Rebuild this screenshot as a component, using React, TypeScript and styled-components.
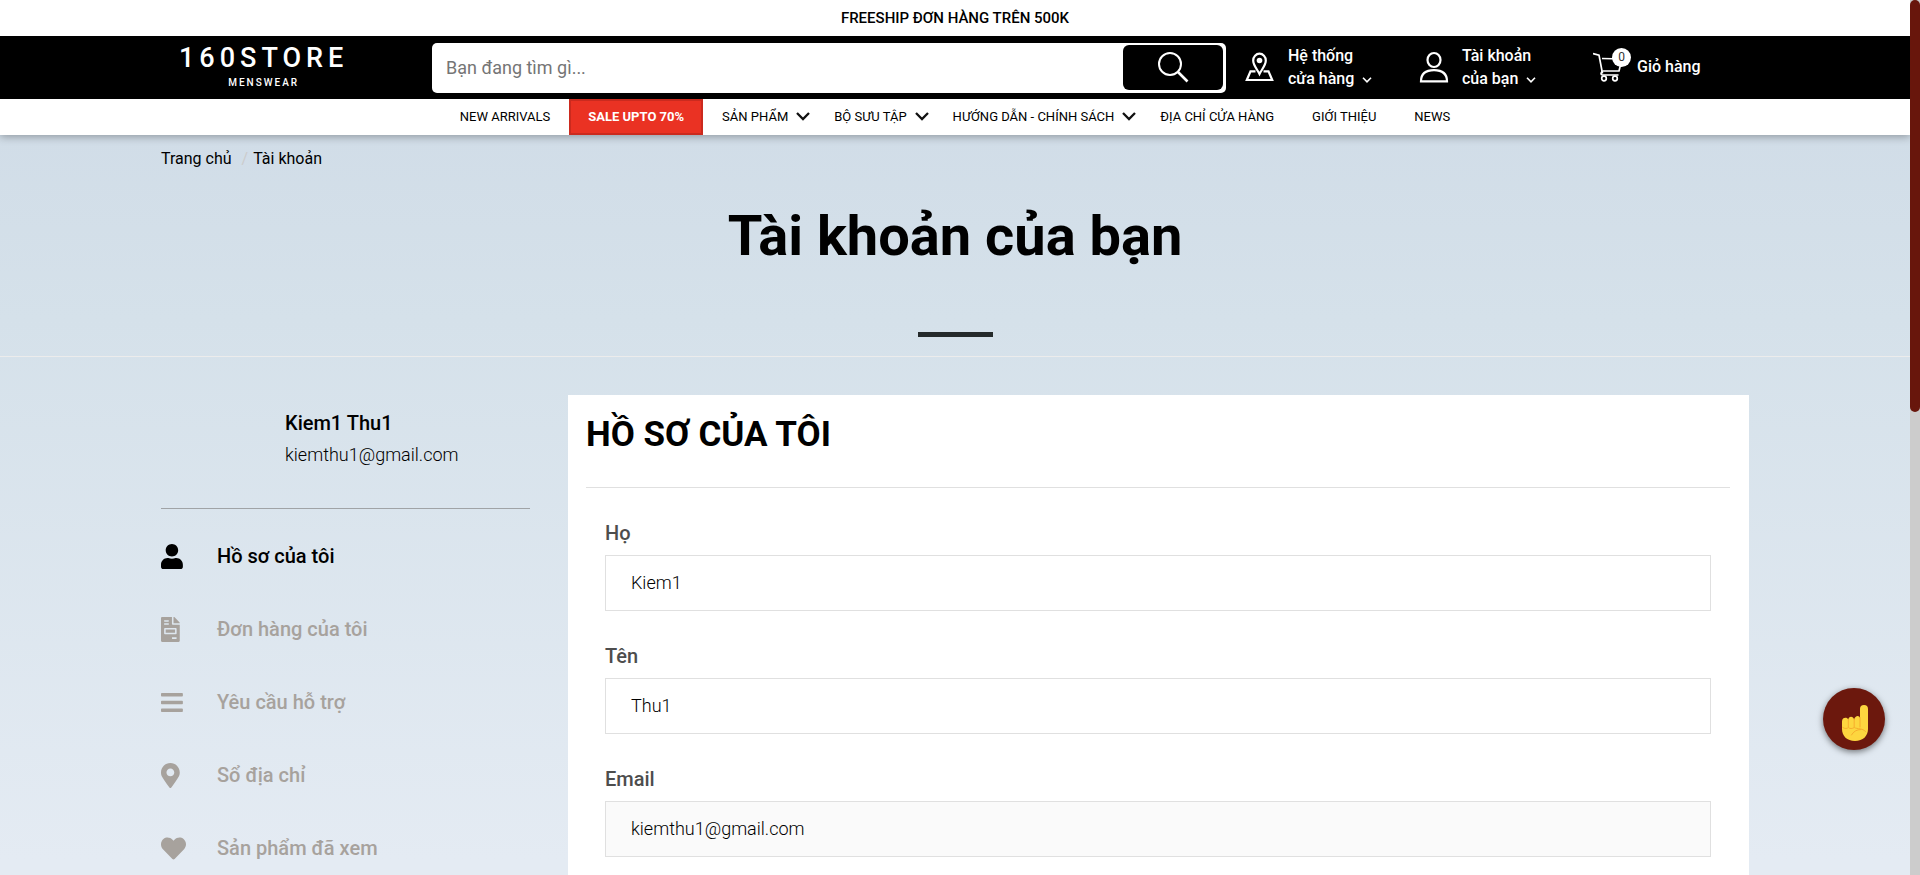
import React from "react";
import styled, { createGlobalStyle, css } from "styled-components";
import { FaBars, FaFileInvoice, FaHeart, FaMapMarkerAlt, FaUser } from "react-icons/fa";

const GlobalStyle = createGlobalStyle`
  *, *::before, *::after { box-sizing: border-box; }
  body {
    margin: 0;
    font-family: Roboto, "Noto Sans", sans-serif;
    font-size: 16px;
    color: #000;
  }
  h1, h2, p, ul { margin: 0; padding: 0; }
  ul { list-style: none; }
  a { color: inherit; text-decoration: none; }
  button, input { font: inherit; color: inherit; }
`;

const Page = styled.div`
  display: flex;
  flex-direction: column;
  min-height: 100vh;
  padding-right: 10px;
  background: linear-gradient(#cedae6 0, #d5e1ea 320px, #e4ebf3 860px);
`;

const Container = styled.div`
  width: calc(100% - 32px);
  max-width: 1588px;
  margin: 0 auto;
`;

const PromoBar = styled.p`
  height: 36px;
  line-height: 36px;
  text-align: center;
  font-size: 15px;
  font-weight: 500;
  background: #fff;
`;

const Header = styled.header`
  background: #000;
  color: #fff;
`;

const HeaderGrid = styled(Container)`
  display: grid;
  grid-template-columns: 271fr 794fr 523fr;
  align-items: center;
  height: 63px;
`;

const Logo = styled.a`
  justify-self: start;
  display: flex;
  flex-direction: column;
  align-items: center;
  margin-left: 18px;
  font-weight: 500;
  text-transform: uppercase;
`;

const LogoName = styled.span`
  font-size: 27px;
  line-height: 30px;
  letter-spacing: 5px;
`;

const LogoTag = styled.span`
  font-size: 10px;
  line-height: 20px;
  letter-spacing: 2px;
`;

const Search = styled.form`
  display: flex;
  height: 50px;
  padding: 2px 3px 3px 2px;
  border-radius: 5px;
  background: #fff;
`;

const SearchInput = styled.input`
  flex: 1;
  min-width: 0;
  padding: 0 12px;
  border: 0;
  background: none;
  color: #000;
  font-size: 18px;
  outline: none;
  &::placeholder { color: #757575; opacity: 1; }
`;

const SearchButton = styled.button`
  display: grid;
  place-items: center;
  width: 100px;
  padding: 0;
  border: 0;
  border-radius: 6px;
  background: #000;
  color: #fff;
`;

const Actions = styled.div`
  display: grid;
  grid-template-columns: 174px 174px auto;
  justify-content: start;
  align-items: center;
  padding: 0 0 2px 19px;
`;

const Action = styled.a`
  display: flex;
  align-items: center;
  gap: 12px;
  font-weight: 500;
  line-height: 23px;
  white-space: nowrap;
`;

const CartAction = styled(Action)`
  gap: 6px;
`;

const CartIcon = styled.span`
  position: relative;
  display: block;
  width: 38px;
  height: 30px;
`;

const CartCount = styled.span`
  position: absolute;
  top: -4px;
  right: 0;
  width: 19px;
  height: 19px;
  border-radius: 50%;
  background: #fff;
  color: #333;
  font-size: 12px;
  font-weight: 400;
  line-height: 19px;
  text-align: center;
`;

const SmallChevron = styled.svg`
  margin-left: 8px;
`;

const Nav = styled.nav`
  position: relative;
  background: #fff;
  box-shadow: 0 2px 8px rgba(0, 0, 0, 0.3);
`;

const NavList = styled.ul`
  display: flex;
  justify-content: center;
  height: 36px;
`;

const NavLink = styled.a<{ $sale?: boolean; $menu?: boolean }>`
  display: flex;
  align-items: center;
  gap: 8px;
  height: 100%;
  padding: ${(p) => (p.$menu ? "0 5px 2px 19px" : "0 19px 2px")};
  font-size: 13px;
  white-space: nowrap;
  ${(p) =>
    p.$sale &&
    css`
      padding: 0 17px 2px;
      border: 2px solid #cb2a1e;
      background: #ea3223;
      color: #fff;
      font-weight: 700;
    `}
`;

const Breadcrumb = styled(Container)`
  display: flex;
  gap: 5px;
  padding-top: 14px;
  line-height: 20px;
`;

const Slash = styled.span`
  padding-left: 5px;
  color: #ccc;
`;

const Banner = styled.section`
  display: flex;
  flex-direction: column;
  align-items: center;
  padding-top: 31px;
  border-bottom: 1px solid #ececec;
`;

const PageTitle = styled.h1`
  font-size: 56px;
  font-weight: 700;
  line-height: 72px;
  text-align: center;
`;

const TitleRule = styled.span`
  width: 75px;
  height: 5px;
  margin: 60px 0 19px;
  background: #252a2b;
`;

const Main = styled(Container).attrs({ as: "main" })`
  flex: 1;
  display: grid;
  grid-template-columns: 369fr 1181fr;
  gap: 38px;
  padding-top: 38px;
`;

const Profile = styled.section`
  height: 114px;
  padding: 12px 0 0 124px;
  border-bottom: 1px solid #a0a3a6;
`;

const ProfileName = styled.p`
  font-size: 20px;
  font-weight: 500;
  line-height: 32px;
`;

const ProfileEmail = styled.p`
  font-size: 18px;
  font-weight: 300;
  line-height: 32px;
`;

const Menu = styled.ul`
  display: flex;
  flex-direction: column;
  gap: 45px;
  padding-top: 33px;
`;

const MenuLink = styled.a<{ $active?: boolean }>`
  display: grid;
  grid-template-columns: 56px 1fr;
  align-items: center;
  height: 28px;
  color: ${(p) => (p.$active ? "#000" : "#a7a29d")};
  font-size: 20px;
  font-weight: 500;
  svg { width: 25px; height: 25px; }
`;

const Card = styled.section`
  padding: 0 19px 0 18px;
  background: #fff;
`;

const CardTitle = styled.h2`
  height: 93px;
  padding-top: 18px;
  border-bottom: 1px solid #e0e0e0;
  font-size: 35px;
  font-weight: 700;
  line-height: 44px;
`;

const Form = styled.form`
  display: flex;
  flex-direction: column;
  gap: 31px;
  padding: 31px 19px 16px;
`;

const Field = styled.div`
  display: flex;
  flex-direction: column;
`;

const FieldLabel = styled.label`
  height: 36px;
  color: #4d4d4d;
  font-size: 20px;
  font-weight: 500;
  line-height: 28px;
`;

const FieldInput = styled.input`
  width: 100%;
  height: 56px;
  padding: 0 25px 2px;
  border: 1px solid #e0e0e0;
  border-radius: 0;
  background: #fff;
  color: #000;
  font-size: 18px;
  font-weight: 300;
  outline: none;
  &:disabled { background: #fafafa; opacity: 1; }
`;

const ContactButton = styled.button`
  position: fixed;
  right: 35px;
  bottom: 125px;
  display: grid;
  place-items: center;
  width: 62px;
  height: 62px;
  padding: 7px 0 0 2px;
  border: 0;
  border-radius: 50%;
  background: #6c180d;
  box-shadow: 0 2px 6px rgba(0, 0, 0, 0.5);
`;

const ScrollTrack = styled.div`
  position: fixed;
  top: 0;
  right: 0;
  bottom: 0;
  width: 10px;
  background: #ccc;
`;

const ScrollThumb = styled.div`
  height: 47.1%;
  border-radius: 5px;
  background: #68160c;
`;

const SearchIcon = () => (
  <svg width="32" height="32" viewBox="0 0 32 32" fill="none" stroke="currentColor" strokeWidth="2" aria-hidden>
    <circle cx="13" cy="13" r="11" />
    <path d="M21 21l9.500 9.500" strokeWidth="2.600" />
  </svg>
);

const StoreIcon = () => (
  <svg width="31" height="30" viewBox="0 0 31 30" fill="none" stroke="currentColor" strokeWidth="2.200" aria-hidden>
    <path d="M14.500 22C12 17 8.200 13.300 8.200 8.500a6.300 6.800 0 0 1 12.600 0c0 4.800-3.800 8.500-6.300 13.500z" />
    <circle cx="14.500" cy="8.500" r="2.800" fill="currentColor" stroke="none" />
    <path d="M10.500 19.300H5.500L1.800 28h25.400l-3.700-8.700h-5" />
  </svg>
);

const UserIcon = () => (
  <svg width="31" height="32" viewBox="0 0 31 32" fill="none" stroke="currentColor" strokeWidth="2.200" aria-hidden>
    <ellipse cx="15" cy="9" rx="6.500" ry="7" />
    <path d="M2 30.300c0-7 4.500-11.100 13-11.100s13 4.100 13 11.100z" />
  </svg>
);

const Cart = () => (
  <svg width="32" height="30" viewBox="0 0 32 30" fill="none" stroke="currentColor" strokeWidth="1.700" aria-hidden>
    <path d="M0 1.500l6 1.700 3.500 18.300" />
    <path d="M9 6.500l20 .5-3 12H9.500" />
    <path d="M9.500 19c-2.500 2.500-1.500 4 0 4h16" />
    <circle cx="11" cy="26.500" r="2.300" />
    <circle cx="22" cy="26.500" r="2.300" />
  </svg>
);

const ActionChevron = () => (
  <SmallChevron width="10" height="7" viewBox="0 0 10 7" fill="none" stroke="currentColor" strokeWidth="1.600" aria-hidden>
    <path d="M1 .8l4 4 4-4" />
  </SmallChevron>
);

const NavChevron = () => (
  <svg width="14" height="9" viewBox="0 0 14 9" fill="none" stroke="#111" strokeWidth="2.300" aria-hidden>
    <path d="M1 1l6 6 6-6" />
  </svg>
);

const PointingHand = () => (
  <svg width="26" height="36" viewBox="0 0 26 36" aria-hidden>
    <path
      fill="#fdd63f"
      d="M18 4a4 4 0 0 1 8 0v20c0 7-5 12-13 12S0 31 0 24v-7.500c0-4.500 5.500-4.500 6.200-1.800.4-4 5.200-4 6 0 .6-4.300 5.300-4.800 5.800-1.500z"
    />
    <path
      fill="none"
      stroke="#f6ae2d"
      strokeWidth="1"
      strokeLinecap="round"
      d="M6.300 15v7M12.200 14v8M18 12.500v9.500M.8 22.500c2 1.500 4.500 1.200 5.500 0 1.500 1.400 4 1.400 5.900 0 3 1.800 8.800.5 11.300 4M9.500 30c2-3.500 5-5.500 9.500-5.500"
    />
  </svg>
);

const navItems = [
  { label: "NEW ARRIVALS" },
  { label: "SALE UPTO 70%", sale: true },
  { label: "SẢN PHẨM", menu: true },
  { label: "BỘ SƯU TẬP", menu: true },
  { label: "HƯỚNG DẪN - CHÍNH SÁCH", menu: true },
  { label: "ĐỊA CHỈ CỬA HÀNG" },
  { label: "GIỚI THIỆU" },
  { label: "NEWS" },
];

const menuItems = [
  { label: "Hồ sơ của tôi", Icon: FaUser, active: true },
  { label: "Đơn hàng của tôi", Icon: FaFileInvoice },
  { label: "Yêu cầu hỗ trợ", Icon: FaBars },
  { label: "Sổ địa chỉ", Icon: FaMapMarkerAlt },
  { label: "Sản phẩm đã xem", Icon: FaHeart },
];

const fields = [
  { id: "last-name", label: "Họ", value: "Kiem1" },
  { id: "first-name", label: "Tên", value: "Thu1" },
  { id: "email", label: "Email", value: "kiemthu1@gmail.com", disabled: true },
];

export default function App() {
  return (
    <>
      <GlobalStyle />
      <Page>
        <PromoBar>FREESHIP ĐƠN HÀNG TRÊN 500K</PromoBar>
        <Header>
          <HeaderGrid>
            <Logo href="#">
              <LogoName>160Store</LogoName>
              <LogoTag>Menswear</LogoTag>
            </Logo>
            <Search role="search">
              <SearchInput type="text" placeholder="Bạn đang tìm gì..." aria-label="Tìm kiếm" />
              <SearchButton type="button" aria-label="Tìm kiếm">
                <SearchIcon />
              </SearchButton>
            </Search>
            <Actions>
              <Action href="#">
                <StoreIcon />
                <span>
                  Hệ thống
                  <br />
                  cửa hàng
                  <ActionChevron />
                </span>
              </Action>
              <Action href="#">
                <UserIcon />
                <span>
                  Tài khoản
                  <br />
                  của bạn
                  <ActionChevron />
                </span>
              </Action>
              <CartAction href="#">
                <CartIcon>
                  <Cart />
                  <CartCount>0</CartCount>
                </CartIcon>
                Giỏ hàng
              </CartAction>
            </Actions>
          </HeaderGrid>
        </Header>
        <Nav>
          <NavList>
            {navItems.map(({ label, sale, menu }) => (
              <li key={label}>
                <NavLink href="#" $sale={sale} $menu={menu}>
                  {label}
                  {menu && <NavChevron />}
                </NavLink>
              </li>
            ))}
          </NavList>
        </Nav>
        <Breadcrumb>
          <a href="#">Trang chủ</a>
          <Slash>/</Slash>
          <span>Tài khoản</span>
        </Breadcrumb>
        <Banner>
          <PageTitle>Tài khoản của bạn</PageTitle>
          <TitleRule />
        </Banner>
        <Main>
          <aside>
            <Profile>
              <ProfileName>Kiem1 Thu1</ProfileName>
              <ProfileEmail>kiemthu1@gmail.com</ProfileEmail>
            </Profile>
            <Menu>
              {menuItems.map(({ label, Icon, active }) => (
                <li key={label}>
                  <MenuLink href="#" $active={active}>
                    <Icon preserveAspectRatio="xMinYMid meet" aria-hidden />
                    {label}
                  </MenuLink>
                </li>
              ))}
            </Menu>
          </aside>
          <Card>
            <CardTitle>HỒ SƠ CỦA TÔI</CardTitle>
            <Form>
              {fields.map(({ id, label, value, disabled }) => (
                <Field key={id}>
                  <FieldLabel htmlFor={id}>{label}</FieldLabel>
                  <FieldInput id={id} type="text" defaultValue={value} disabled={disabled} />
                </Field>
              ))}
            </Form>
          </Card>
        </Main>
      </Page>
      <ContactButton type="button" aria-label="Liên hệ">
        <PointingHand />
      </ContactButton>
      <ScrollTrack>
        <ScrollThumb />
      </ScrollTrack>
    </>
  );
}
